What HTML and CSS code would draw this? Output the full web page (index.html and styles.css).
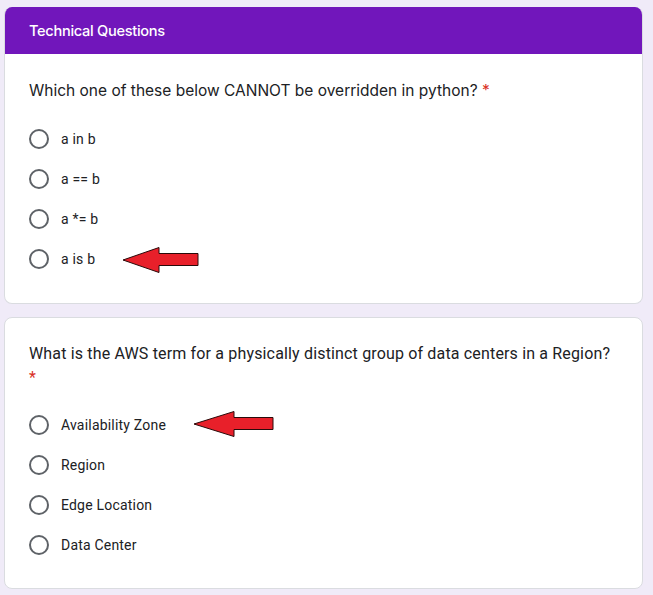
FILE: index.html
```html
<!DOCTYPE html>
<html>
<head>
<meta charset="utf-8">
<link rel="stylesheet" href="styles.css">
</head>
<body>
<main class="page">
  <section class="card card-first">
    <header class="card-header">Technical Questions</header>
    <div class="card-body">
      <div class="question question-sans">Which one of these below CANNOT be overridden in python? <span class="req">*</span></div>
      <ul class="options">
        <li class="option"><span class="radio"></span><span class="label">a in b</span></li>
        <li class="option"><span class="radio"></span><span class="label">a == b</span></li>
        <li class="option"><span class="radio"></span><span class="label">a *= b</span></li>
        <li class="option"><span class="radio"></span><span class="label">a is b</span>
          <svg class="arrow arrow-one" width="78" height="28" viewBox="0 0 78 28"><polygon points="1,14 37,1.5 37,7.5 76,7.5 76,19.5 37,19.5 37,26.5" fill="#e8202a" stroke="#2a0a0a" stroke-width="1"/></svg>
        </li>
      </ul>
    </div>
  </section>
  <section class="card card-second">
    <div class="card-body">
      <div class="question">What is the AWS term for a physically distinct group of data centers in a Region? <span class="req">*</span></div>
      <ul class="options">
        <li class="option"><span class="radio"></span><span class="label">Availability Zone</span>
          <svg class="arrow arrow-two" width="82" height="28" viewBox="0 0 82 28"><polygon points="1,14 41,1.5 41,7.5 80,7.5 80,19.5 41,19.5 41,26.5" fill="#e8202a" stroke="#2a0a0a" stroke-width="1"/></svg>
        </li>
        <li class="option"><span class="radio"></span><span class="label">Region</span></li>
        <li class="option"><span class="radio"></span><span class="label">Edge Location</span></li>
        <li class="option"><span class="radio"></span><span class="label">Data Center</span></li>
      </ul>
    </div>
  </section>
</main>
</body>
</html>
```
FILE: styles.css
```css
html, body {
  margin: 0;
  padding: 0;
  background: #f0ebf8;
}
body {
  font-family: Roboto, "Liberation Sans", Arial, sans-serif;
  color: #202124;
}
.page {
  padding: 7px 10px 0 4px;
  display: flex;
  flex-direction: column;
  gap: 13px;
}
.card {
  background: #ffffff;
  border: 1px solid #dadce0;
  border-radius: 8px;
  width: 637px;
  overflow: hidden;
}
.card-first {
  border-top: none;
}
.card-header {
  background: #7116bb;
  color: #ffffff;
  height: 47px;
  box-sizing: border-box;
  padding: 13px 24px 0 24px;
  font-family: Inter, "Open Sans", sans-serif;
  font-weight: 500;
  font-size: 14.6px;
  line-height: 22px;
  letter-spacing: -0.3px;
}
.card-body {
  padding: 24px 24px 24px 24px;
}
.card-second .card-body {
  padding-top: 24px;
  padding-bottom: 23px;
}
.question {
  font-size: 16px;
  line-height: 24px;
  letter-spacing: 0.16px;
  color: #202124;
}
.question-sans {
  font-family: Inter, "Open Sans", sans-serif;
  font-size: 15.5px;
  letter-spacing: 0;
  padding-top: 1px;
}
.req {
  color: #d93025;
}
.options {
  list-style: none;
  margin: 16px 0 0 0;
  padding: 0;
}
.card-second .options {
  margin-top: 15px;
}
.option {
  position: relative;
  height: 40px;
  display: flex;
  align-items: center;
  gap: 12px;
  padding-left: 0;
}
.radio {
  width: 16px;
  height: 16px;
  border: 2px solid #5f6368;
  border-radius: 50%;
  flex: none;
}
.label {
  font-size: 14px;
  letter-spacing: 0.2px;
  color: #202124;
}
.arrow {
  position: absolute;
  display: block;
}
.arrow-one {
  left: 93px;
  top: 7px;
}
.arrow-two {
  left: 164px;
  top: 5px;
}
```
